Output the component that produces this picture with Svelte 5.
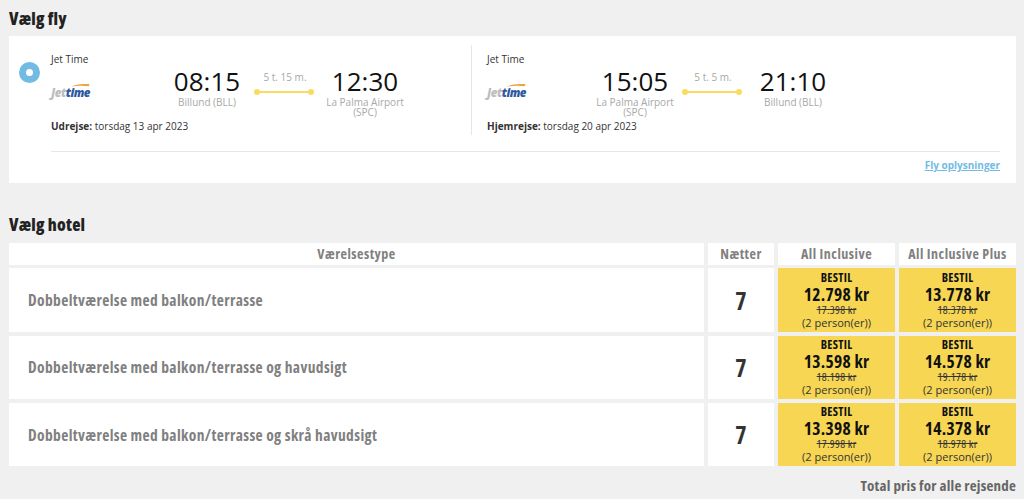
<script>
  const legs = [
    { cls: 'out', label: 'Udrejse:', date: 'torsdag 13 apr 2023', dep: '08:15', depPlace: 'Billund (BLL)', dur: '5 t. 15 m.', arr: '12:30', arrPlace: 'La Palma Airport (SPC)' },
    { cls: 'home', label: 'Hjemrejse:', date: 'torsdag 20 apr 2023', dep: '15:05', depPlace: 'La Palma Airport (SPC)', dur: '5 t. 5 m.', arr: '21:10', arrPlace: 'Billund (BLL)' }
  ];

  const rooms = [
    { name: 'Dobbeltværelse med balkon/terrasse', nights: 7, prices: [['12.798 kr', '17.398 kr'], ['13.778 kr', '18.378 kr']] },
    { name: 'Dobbeltværelse med balkon/terrasse og havudsigt', nights: 7, prices: [['13.598 kr', '18.198 kr'], ['14.578 kr', '19.178 kr']] },
    { name: 'Dobbeltværelse med balkon/terrasse og skrå havudsigt', nights: 7, prices: [['13.398 kr', '17.998 kr'], ['14.378 kr', '18.978 kr']] }
  ];
</script>

<div class="page">
  <h2 class="fly-title">Vælg fly</h2>

  <section class="flight-card">
    <div class="flight-main">
      <span class="radio"></span>
      <div class="flight-body">
        <div class="legs">
          {#each legs as leg}
            <div class="leg {leg.cls}">
              <div class="airline">Jet Time</div>
              <div class="leg-row">
                <div class="logo">
                  <svg class="swoosh" viewBox="0 0 24 5" width="20" height="4">
                    <path d="M1 4.5C7 1.5 15 .6 24 1.6L23 4C15 3 8 3.2 1 4.5Z" fill="#eda33a"></path>
                  </svg>
                  <span class="logo-jet">Jet</span><span class="logo-time">time</span>
                </div>
                <div class="times">
                  <div class="stop">
                    <div class="clock">{leg.dep}</div>
                    <div class="place">{leg.depPlace}</div>
                  </div>
                  <div class="route">
                    <div class="duration">{leg.dur}</div>
                    <div class="track"></div>
                  </div>
                  <div class="stop">
                    <div class="clock">{leg.arr}</div>
                    <div class="place">{leg.arrPlace}</div>
                  </div>
                </div>
              </div>
              <div class="leg-date"><b>{leg.label}</b> {leg.date}</div>
            </div>
          {/each}
        </div>
        <div class="flight-foot">
          <a href="#fly" class="info-link">Fly oplysninger</a>
        </div>
      </div>
    </div>
  </section>

  <h2 class="hotel-title">Vælg hotel</h2>

  <div class="rooms">
    <div class="head">Værelsestype</div>
    <div class="head">Nætter</div>
    <div class="head">All Inclusive</div>
    <div class="head">All Inclusive Plus</div>

    {#each rooms as room}
      <div class="room-name">{room.name}</div>
      <div class="nights">{room.nights}</div>
      {#each room.prices as price}
        <div class="price">
          <div class="order">BESTIL</div>
          <div class="amount">{price[0]}</div>
          <div class="old">{price[1]}</div>
          <div class="persons">(2 person(er))</div>
        </div>
      {/each}
    {/each}
  </div>

  <div class="total-note">Total pris for alle rejsende</div>
</div>

<style>
  :global(body) {
    margin: 0;
    background: #f0f0f0;
  }

  .page {
    width: 1024px;
    height: 499px;
    overflow: hidden;
    box-sizing: border-box;
    padding: 0 8px 0 9px;
    font-family: "Open Sans", sans-serif;
    color: #333;
  }

  h2 {
    margin: 0;
    font-size: 17px;
    font-weight: 800;
    font-stretch: condensed;
    letter-spacing: 0.2px;
    line-height: 22px;
    color: #222;
  }

  .fly-title {
    padding-top: 8px;
    height: 28px;
  }

  .hotel-title {
    padding-top: 31px;
    height: 29px;
    margin-top: 0;
  }

  .flight-card {
    background: #fff;
    height: 147px;
    box-sizing: border-box;
    padding: 9px 16px 0 10px;
  }

  .flight-main {
    display: flex;
    align-items: flex-start;
  }

  .radio {
    width: 7px;
    height: 7px;
    margin-top: 17px;
    margin-right: 11px;
    border: 7px solid #72bbe4;
    border-radius: 50%;
    background: #fff;
    flex: none;
  }

  .flight-body {
    flex: 1;
  }

  .legs {
    display: flex;
    height: 106px;
    border-bottom: 1px solid #e6e6e6;
  }

  .leg {
    height: 90px;
    box-sizing: border-box;
    padding-top: 8px;
  }

  .leg.out {
    width: 421px;
    border-right: 1px solid #e6e6e6;
  }

  .leg.home {
    padding-left: 15px;
    flex: 1;
  }

  .airline {
    font-size: 10px;
    line-height: 13px;
    color: #333;
  }

  .leg-row {
    display: flex;
    height: 45px;
    margin-top: 5px;
  }

  .logo {
    position: relative;
    width: 40px;
    padding-top: 15px;
    box-sizing: border-box;
    font-size: 11.5px;
    line-height: 14px;
    font-weight: 800;
    font-style: italic;
    letter-spacing: -0.5px;
    white-space: nowrap;
  }

  .swoosh {
    position: absolute;
    top: 12px;
    left: 19px;
  }

  .logo-jet {
    color: #bdbdbd;
  }

  .logo-time {
    color: #2f5a9e;
  }

  .times {
    display: flex;
    align-items: flex-start;
  }

  .out .times {
    margin-left: 74px;
  }

  .home .times {
    margin-left: 66px;
  }

  .stop {
    width: 84px;
    text-align: center;
  }

  .clock {
    font-size: 26px;
    line-height: 26px;
    margin-top: -3px;
    margin-bottom: 3px;
    color: #111;
  }

  .place {
    font-size: 10px;
    line-height: 10px;
    color: #a8a8a8;
  }

  .route {
    width: 60px;
    margin: 0 9px 0 5px;
    text-align: center;
  }

  .duration {
    font-size: 10px;
    line-height: 13px;
    padding-left: 2px;
    color: #a8a8a8;
  }

  .track {
    position: relative;
    height: 2px;
    margin-top: 7px;
    background: #fadb62;
  }

  .track::before,
  .track::after {
    content: "";
    position: absolute;
    top: -2px;
    width: 6px;
    height: 6px;
    border-radius: 50%;
    background: #fadb62;
  }

  .track::before {
    left: 0;
  }

  .track::after {
    right: 0;
  }

  .leg-date {
    font-size: 10px;
    line-height: 14px;
    margin-top: 3px;
    color: #333;
  }

  .flight-foot {
    display: flex;
    justify-content: flex-end;
    padding-top: 7px;
  }

  .info-link {
    font-size: 10px;
    line-height: 13px;
    font-weight: 700;
    color: #72bbe4;
    text-decoration: underline;
  }

  .rooms {
    display: grid;
    grid-template-columns: 695px 66px 117px 117px;
    grid-template-rows: 21.5px 63.4px 63.4px 63.4px;
    column-gap: 4px;
    row-gap: 3.9px;
    font-stretch: condensed;
  }

  .head {
    background: #fff;
    display: flex;
    align-items: center;
    justify-content: center;
    font-size: 14px;
    font-weight: 700;
    letter-spacing: 0.5px;
    color: #808080;
  }

  .room-name {
    background: #fff;
    display: flex;
    align-items: center;
    padding-left: 19px;
    font-size: 15.5px;
    font-weight: 700;
    letter-spacing: 0.37px;
    color: #808080;
  }

  .nights {
    background: #fff;
    display: flex;
    align-items: center;
    justify-content: center;
    font-size: 24px;
    font-weight: 700;
    color: #333;
  }

  .price {
    background: #f7d654;
    text-align: center;
    color: #111;
    padding-top: 2.5px;
  }

  .order {
    font-size: 12px;
    line-height: 13px;
    font-weight: 700;
    letter-spacing: 0.3px;
  }

  .amount {
    font-size: 17.5px;
    line-height: 20px;
    font-weight: 700;
    letter-spacing: 0.3px;
  }

  .old {
    font-size: 11.5px;
    line-height: 12px;
    letter-spacing: 0.3px;
    text-decoration: line-through;
    color: #333;
  }

  .persons {
    font-size: 11px;
    line-height: 13px;
    font-stretch: normal;
    color: #333;
  }

  .total-note {
    margin-top: 9px;
    text-align: right;
    font-size: 15px;
    line-height: 20px;
    font-weight: 700;
    font-stretch: condensed;
    letter-spacing: 0.2px;
    color: #666;
  }
</style>
